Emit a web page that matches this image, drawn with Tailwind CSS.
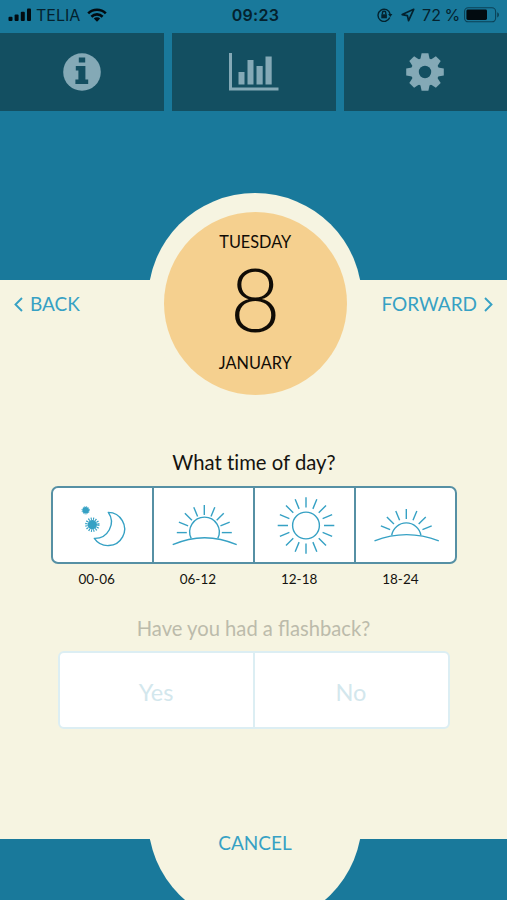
<!DOCTYPE html>
<html lang="en">
<head>
    <meta charset="UTF-8">
    <meta name="viewport" content="width=device-width, initial-scale=1.0">
    <title>Diary</title>
    <script src="https://cdn.jsdelivr.net/npm/@tailwindcss/browser@4"></script>
</head>
<body class="bg-[#f6f4e1] font-[Lato,sans-serif]">
<div class="w-[507px] h-[900px] flex flex-col overflow-hidden">
    <!-- Header -->
    <header class="h-[280px] shrink-0 bg-[#19799b]">
        <!-- Status bar -->
        <div class="h-[32.5px] grid grid-cols-3 items-center pl-2 pr-2 pb-[3px] text-[#04222e] font-[Inter,sans-serif]">
            <div class="flex items-center">
                <svg class="w-6 h-[14px]" viewBox="0 0 24 14" fill="#020b10">
                    <rect x="0.5" y="8.7" width="4" height="4.3" rx="1"/>
                    <rect x="6.6" y="6.5" width="4" height="6.5" rx="1"/>
                    <rect x="12.8" y="3.7" width="4" height="9.3" rx="1"/>
                    <rect x="19" y="0.5" width="4" height="12.5" rx="1"/>
                </svg>
                <span class="ml-[4px] text-[16px] w-[46px]">TELIA</span>
                <svg class="ml-[5px] w-5 h-[14px]" viewBox="0 0 20 14" fill="none" stroke="#020b10" stroke-width="2.6">
                    <path d="M1.2 5.4A12.6 12.6 0 0 1 18.8 5.4"/>
                    <path d="M4.4 8.7A8 8 0 0 1 15.6 8.7"/>
                    <path d="M10 13.7L6.8 10.6A4.6 4.6 0 0 1 13.2 10.6Z" fill="#020b10" stroke="none"/>
                </svg>
            </div>
            <div class="text-center text-[16px] font-semibold tracking-[0.3px] pl-[4px]">09:23</div>
            <div class="flex items-center justify-end">
                <svg class="w-[16px] h-[14px]" viewBox="0 0 16 14" fill="none" stroke="#04222e" stroke-width="1.4">
                    <path d="M12.8 9.6A6.1 6.1 0 1 1 13.1 6"/>
                    <path d="M11.1 6H15.4L13.3 9Z" fill="#04222e" stroke="none"/>
                    <rect x="4.3" y="6.3" width="5.6" height="4" fill="#04222e" stroke="none"/>
                    <path d="M5.4 6.5V5A1.7 1.7 0 0 1 8.8 5V6.5"/>
                </svg>
                <svg class="ml-[8px] w-[14px] h-[14px]" viewBox="0 0 14 14" fill="none" stroke="#04222e" stroke-width="1.7" stroke-linejoin="round">
                    <path d="M12.7 1.3L1.2 6.6L6.4 7.6L7.6 12.7Z"/>
                </svg>
                <span class="ml-[7px] text-[16px] w-[38px] whitespace-nowrap tracking-[0.2px] [word-spacing:-1.5px]">72 %</span>
                <svg class="ml-[4px] -mr-[1px] w-[36px] h-[16px]" viewBox="0 0 36 16">
                    <rect x="0.6" y="0.8" width="31" height="14" rx="3.6" fill="none" stroke="#0b4257" stroke-width="1.1"/>
                    <rect x="2.4" y="2.6" width="20.6" height="10.4" rx="1.4" fill="#020b10"/>
                    <path d="M33.2 5.2C35.6 6.2 35.6 9.4 33.2 10.4Z" fill="#0b4257"/>
                </svg>
            </div>
        </div>
        <!-- Tabs -->
        <nav class="h-[78.5px] grid grid-cols-[164px_164px_163px] gap-x-2">
            <a class="bg-[#134f61] flex items-center justify-center">
                <svg class="w-[38px] h-[38px]" viewBox="0 0 38 38">
                    <circle cx="19" cy="19" r="18.8" fill="#84a9b6"/>
                    <path d="M15.8 4.5H22.2V9.6H15.8ZM12.8 13H22.4V26.5H25.2V31H12.4V26.5H15.4V17.6H12.8Z" fill="#134f61"/>
                </svg>
            </a>
            <a class="bg-[#134f61] flex items-center justify-center">
                <svg class="w-[50px] h-[38px]" viewBox="0 0 50 38" fill="#84a9b6">
                    <path d="M0 0H3V34.5H49.5V37.5H0Z"/>
                    <rect x="9.5" y="19" width="6" height="12.5"/>
                    <rect x="18.5" y="7" width="6" height="24.5"/>
                    <rect x="27.5" y="13" width="6.2" height="18.5"/>
                    <rect x="36.5" y="3.5" width="6.2" height="28"/>
                </svg>
            </a>
            <a class="bg-[#134f61] flex items-center justify-center pr-[1px]">
                <svg class="w-[38px] h-[38px]" viewBox="-19 -19 38 38">
                    <g fill="#84a9b6">
                        <circle r="14"/>
                        <path id="tooth" d="M-4.6 -13L-3.4 -18.8H3.4L4.6 -13V13L3.4 18.8H-3.4L-4.6 13Z"/>
                        <use href="#tooth" transform="rotate(45)"/>
                        <use href="#tooth" transform="rotate(90)"/>
                        <use href="#tooth" transform="rotate(135)"/>
                    </g>
                    <circle r="6.2" fill="#134f61"/>
                </svg>
            </a>
        </nav>
    </header>

    <!-- Main Content -->
    <main class="h-[559px] shrink-0 flex flex-col items-center">
        <!-- Date picker -->
        <div class="relative w-full h-[115px] shrink-0 flex justify-between px-[14px] pt-[12px] text-[19px] leading-6 text-[#36a1c4]">
            <a class="flex items-center h-6 gap-[7px]">
                <svg class="w-[9px] h-[15px]" viewBox="0 0 9 15" fill="none" stroke="currentColor" stroke-width="1.9"><path d="M8 1L1.5 7.5L8 14"/></svg>
                BACK
            </a>
            <a class="flex items-center h-6 gap-[7px]">
                FORWARD
                <svg class="w-[9px] h-[15px]" viewBox="0 0 9 15" fill="none" stroke="currentColor" stroke-width="1.9"><path d="M1 1L7.5 7.5L1 14"/></svg>
            </a>
            <div class="absolute left-[147.5px] -top-[87.5px] size-[214.5px] rounded-full bg-[#f6f4e1] flex justify-center pl-[1px] pt-[19.5px] text-[#100c06]">
                <div class="w-[182.5px] h-[182.5px] shrink-0 rounded-full bg-[#f5d08f] flex flex-col items-center pt-[20px]">
                    <span class="text-[16.3px] leading-5">TUESDAY</span>
                    <span class="mt-[3px] text-[88px] leading-[86px] font-light">8</span>
                    <span class="mt-[12px] text-[16.3px] leading-5">JANUARY</span>
                </div>
            </div>
        </div>

        <!-- Time of day -->
        <h2 class="mt-[55px] ml-[1px] text-[20.3px] leading-6 text-[#14130f] [font-variant-ligatures:none]">What time of day?</h2>
        <div class="mt-[12px] w-[406px] h-[78px] ml-[1px] shrink-0 grid grid-cols-[101px_101px_101px_1fr] divide-x-2 divide-[#5690a4] border-2 border-[#5690a4] rounded-[7px] bg-white overflow-hidden">
            <div class="flex items-center justify-center">
                <svg class="w-[99px] h-[74px]" viewBox="53 488 99 74" fill="none" stroke="#36a1c4" stroke-width="1.4">
                    <path d="M108.3 512.4A16.6 16.6 0 1 1 94.3 538.4A16.5 16.5 0 0 0 108.3 512.4Z" stroke-linejoin="round"/>
                    <g fill="#36a1c4" stroke="none">
                        <circle cx="85.7" cy="510.3" r="3.3"/>
                        <circle cx="92.3" cy="524.7" r="4.7"/>
                    </g>
                    <circle cx="85.7" cy="510.3" r="3.7" stroke-width="1" stroke-dasharray="1 0.94"/>
                    <circle cx="92.3" cy="524.7" r="5.9" stroke-width="2.6" stroke-dasharray="1.1 1.217"/>
                </svg>
            </div>
            <div class="flex items-center justify-center">
                <svg class="w-[99px] h-[74px]" viewBox="154 488 99 74" fill="none" stroke="#36a1c4" stroke-width="1.4">
                    <path d="M191.2 538.4A14.8 14.8 0 1 1 217.8 538.4"/>
                    <path d="M172.7 544.7Q204.5 530.7 236.7 544.7"/>
                    <g transform="translate(204.3 532.6)">
                        <path id="ray" d="M0 -17.5V-27.5"/>
                        <use href="#ray" transform="rotate(-90)"/>
                        <use href="#ray" transform="rotate(-67.5)"/>
                        <use href="#ray" transform="rotate(-45)"/>
                        <use href="#ray" transform="rotate(-22.5)"/>
                        <use href="#ray" transform="rotate(22.5)"/>
                        <use href="#ray" transform="rotate(45)"/>
                        <use href="#ray" transform="rotate(67.5)"/>
                        <use href="#ray" transform="rotate(90)"/>
                    </g>
                </svg>
            </div>
            <div class="flex items-center justify-center">
                <svg class="w-[99px] h-[74px]" viewBox="255 488 99 74" fill="none" stroke="#36a1c4" stroke-width="1.4">
                    <g transform="translate(306 525.5)">
                        <circle r="13.4"/>
                        <path id="rays" d="M0 -18V-28.3M0 18V28.3"/>
                        <use href="#rays" transform="rotate(22.5)"/>
                        <use href="#rays" transform="rotate(45)"/>
                        <use href="#rays" transform="rotate(67.5)"/>
                        <use href="#rays" transform="rotate(90)"/>
                        <use href="#rays" transform="rotate(112.5)"/>
                        <use href="#rays" transform="rotate(135)"/>
                        <use href="#rays" transform="rotate(157.5)"/>
                    </g>
                </svg>
            </div>
            <div class="flex items-center justify-center">
                <svg class="w-[98px] h-[74px]" viewBox="356.5 488 98 74" fill="none" stroke="#36a1c4" stroke-width="1.4">
                    <path d="M391.2 535.3A14.8 14.8 0 0 1 420.4 535.3"/>
                    <path d="M374 540.9Q406 528.3 438.3 540.9"/>
                    <g transform="translate(405.8 536.4)">
                        <use href="#ray"/>
                        <use href="#ray" transform="rotate(-67.5)"/>
                        <use href="#ray" transform="rotate(-45)"/>
                        <use href="#ray" transform="rotate(-22.5)"/>
                        <use href="#ray" transform="rotate(22.5)"/>
                        <use href="#ray" transform="rotate(45)"/>
                        <use href="#ray" transform="rotate(67.5)"/>
                    </g>
                </svg>
            </div>
        </div>
        <div class="mt-[6px] w-[405px] mr-[10px] grid grid-cols-4 text-center text-[13.5px] leading-[18px] text-[#14130f]">
            <span>00-06</span>
            <span>06-12</span>
            <span>12-18</span>
            <span>18-24</span>
        </div>

        <!-- Follow-up question, inactive until a time is chosen -->
        <h2 class="mt-[28px] text-[20.2px] leading-6 text-[#bcbbab]">Have you had a flashback?</h2>
        <div class="mt-[11px] w-[392px] h-[78px] shrink-0 grid grid-cols-[195px_1fr] divide-x-2 divide-[#dceef3] border-2 border-[#dceef3] rounded-[6px] bg-white text-[23.5px] text-[#d3e7ed]">
            <div class="flex items-center justify-center pt-[5px]">Yes</div>
            <div class="flex items-center justify-center pt-[5px]">No</div>
        </div>
    </main>

    <!-- Footer -->
    <footer class="relative h-[61px] shrink-0 bg-[#19799b]">
        <div class="absolute left-[147.5px] -top-[128px] size-[214.5px] rounded-full bg-[#f6f4e1] [clip-path:inset(128px_0_0_0)]"></div>
        <a class="absolute inset-x-0 -top-[8px] pl-[3px] text-center text-[19px] leading-6 text-[#36a1c4]">CANCEL</a>
    </footer>
</div>
</body>
</html>
